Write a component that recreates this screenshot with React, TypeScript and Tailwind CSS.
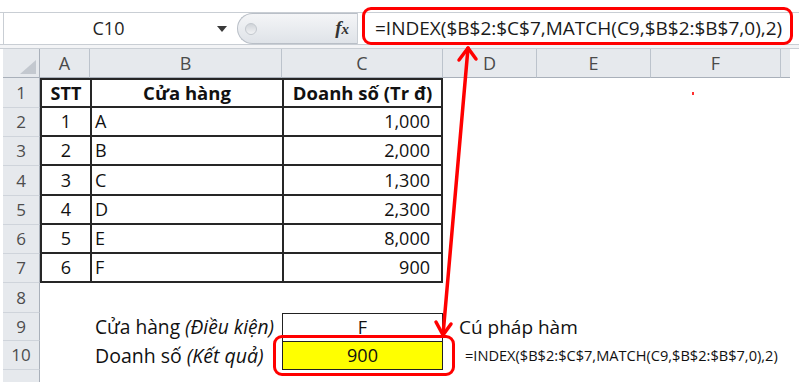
import React from "react"

const cols = [
  { key: "A", w: "w-[50px]" },
  { key: "B", w: "w-[192px]" },
  { key: "C", w: "w-[161px]" },
  { key: "D", w: "w-[94px]" },
  { key: "E", w: "w-[114px]" },
  { key: "F", w: "w-[130px]" },
]

const rowHeights = ["h-[30px]", "h-[29px]", "h-[29px]", "h-[30px]", "h-[29px]", "h-[29px]", "h-[29px]", "h-[30px]", "h-[28px]", "h-[29px]"]

const sales = [
  { stt: "1", store: "A", value: "1,000" },
  { stt: "2", store: "B", value: "2,000" },
  { stt: "3", store: "C", value: "1,300" },
  { stt: "4", store: "D", value: "2,300" },
  { stt: "5", store: "E", value: "8,000" },
  { stt: "6", store: "F", value: "900" },
]

const tb = "border-[#262626]"

function RowHead({ n, h }: { n: string; h: string }) {
  return (
    <div className={`${h} w-[37px] shrink-0 flex items-center justify-center bg-[#e6e9ed] border-r border-b border-r-[#a9b0ba] border-b-[#cfd4db] text-[17px] text-[#4d4d4d]`}>
      {n}
    </div>
  )
}

function Blank({ w, h }: { w: string; h: string }) {
  return <div className={`${w} ${h} shrink-0`} />
}

function FormulaBar() {
  return (
    <div className="h-[49px] pt-[12px] bg-white">
      <div className="h-[32px] flex border-t border-[#c9ced4]">
        {/* name box */}
        <div className="ml-[3px] w-[234px] h-[31px] shrink-0 flex items-center border-l border-[#c9ced4] bg-white">
          <span className="w-[209px] text-center text-[18px] text-[#1f1f1f]">C10</span>
          <svg width="10" height="6" viewBox="0 0 10 6" className="ml-[4px]">
            <path d="M0 0 L10 0 L5 6 Z" fill="#3a3a3a" />
          </svg>
        </div>
        {/* splitter + fx */}
        <div className="w-[120px] h-[31px] shrink-0 flex items-center rounded-l-[16px] border border-r-0 border-[#b9bfc7] bg-gradient-to-b from-[#f4f5f7] to-[#dfe3e8]">
          <div className="ml-[7px] w-[12px] h-[12px] rounded-full bg-gradient-to-b from-[#d0d4d9] to-[#f2f3f5] border border-[#c3c8ce]" />
          <span className="ml-auto mr-[8px] font-[family-name:'Liberation_Serif',serif] italic font-bold text-[19px] text-[#333]">
            f<span className="text-[15px]">x</span>
          </span>
        </div>
        <div className="flex-1 min-w-0 h-[31px] flex items-center pl-[17px] bg-white border-l border-[#c9ced4]">
          <span className="text-[19px] text-[#1a1a1a] whitespace-nowrap">=INDEX($B$2:$C$7,MATCH(C9,$B$2:$B$7,0),2)</span>
        </div>
      </div>
      <div className="h-[5px] border-t border-b border-[#c9ced4] bg-[#f3f4f6]" />
    </div>
  )
}

function ColumnHeaders() {
  return (
    <div className="flex h-[29px] pl-[3px]">
      <div className="w-[37px] h-full shrink-0 relative bg-[#e6e9ed] border-r border-b border-[#a9b0ba]">
        <svg width="16" height="14" viewBox="0 0 16 14" className="absolute right-[3px] bottom-[3px]">
          <path d="M16 0 L16 14 L0 14 Z" fill="#c3c8cf" />
        </svg>
      </div>
      {cols.map((c) => (
        <div key={c.key} className={`${c.w} h-full shrink-0 flex items-center justify-center bg-[#e6e9ed] border-r border-b border-r-[#bcc3cc] border-b-[#a9b0ba] text-[18px] text-[#4a4a4a]`}>
          {c.key}
        </div>
      ))}
      <div className="w-[9px] h-full shrink-0 bg-[#e6e9ed] border-b border-[#a9b0ba]" />
    </div>
  )
}

export default function App() {
  return (
    <div className="relative w-[799px] h-[382px] overflow-hidden bg-white font-[family-name:'Open_Sans',sans-serif] text-[#111]">
      <FormulaBar />
      <ColumnHeaders />

      {/* row 1: table header */}
      <div className="flex pl-[3px]">
        <RowHead n="1" h={rowHeights[0]} />
        <div className={`w-[50px] ${rowHeights[0]} shrink-0 flex items-center justify-center border-2 border-r-0 ${tb} font-bold text-[18px]`}>STT</div>
        <div className={`w-[192px] ${rowHeights[0]} shrink-0 flex items-center justify-center border-2 border-r-0 ${tb} font-bold text-[18.5px]`}>Cửa hàng</div>
        <div className={`w-[161px] ${rowHeights[0]} shrink-0 flex items-center justify-center border-2 ${tb} font-bold text-[18.5px]`}>Doanh số (Tr đ)</div>
      </div>

      {/* rows 2-7: data */}
      {sales.map((s, i) => {
        const h = rowHeights[i + 1]
        return (
          <div key={s.stt} className="flex pl-[3px]">
            <RowHead n={String(i + 2)} h={h} />
            <div className={`w-[50px] ${h} shrink-0 flex items-center justify-center border-l-2 border-b-2 ${tb} text-[18px]`}>{s.stt}</div>
            <div className={`w-[192px] ${h} shrink-0 flex items-center pl-[3px] border-l-2 border-b-2 ${tb} text-[18px]`}>{s.store}</div>
            <div className={`w-[161px] ${h} shrink-0 flex items-center justify-end pr-[11px] border-x-2 border-b-2 ${tb} text-[18px]`}>{s.value}</div>
          </div>
        )
      })}

      {/* row 8 */}
      <div className="flex pl-[3px]">
        <RowHead n="8" h={rowHeights[7]} />
        <Blank w="w-[50px]" h={rowHeights[7]} />
      </div>

      {/* row 9 */}
      <div className="flex pl-[3px]">
        <RowHead n="9" h={rowHeights[8]} />
        <Blank w="w-[50px]" h={rowHeights[8]} />
        <div className={`w-[192px] ${rowHeights[8]} shrink-0 flex items-center pl-[5px] text-[19.2px] whitespace-nowrap`}>
          Cửa hàng&nbsp;<i>(Điều kiện)</i>
        </div>
        <div className={`w-[161px] ${rowHeights[8]} shrink-0 flex items-center justify-center border border-b-0 border-[#222] text-[18px]`}>F</div>
        <div className={`${rowHeights[8]} flex items-center pl-[16px] text-[19px] whitespace-nowrap`}>Cú pháp hàm</div>
      </div>

      {/* row 10 */}
      <div className="flex pl-[3px]">
        <RowHead n="10" h={rowHeights[9]} />
        <Blank w="w-[50px]" h={rowHeights[9]} />
        <div className={`w-[192px] ${rowHeights[9]} shrink-0 flex items-center pl-[5px] text-[19.5px] whitespace-nowrap`}>
          Doanh số&nbsp;<i>(Kết quả)</i>
        </div>
        <div className={`w-[161px] ${rowHeights[9]} shrink-0 flex items-center justify-center border border-[#222] bg-[#ffff00] text-[18px]`}>900</div>
        <div className={`${rowHeights[9]} flex items-center pl-[22px] text-[14.6px] whitespace-nowrap`}>=INDEX($B$2:$C$7,MATCH(C9,$B$2:$B$7,0),2)</div>
      </div>

      {/* row 11 (cut off) */}
      <div className="flex pl-[3px]">
        <RowHead n="" h="h-[29px]" />
      </div>

      {/* annotations */}
      <div className="absolute left-[362px] top-[7px] w-[431px] h-[38px] rounded-[9px] border-[3.5px] border-[#ff0000]" />
      <div className="absolute left-[273px] top-[335px] w-[182px] h-[41px] rounded-[9px] border-[3.5px] border-[#ff0000]" />
      <div className="absolute left-[692px] top-[92px] w-[2px] h-[3px] bg-[#ff3030]" />
      <svg className="absolute left-0 top-0 pointer-events-none" width="799" height="382" viewBox="0 0 799 382">
        <g stroke="#ff0000" strokeWidth="3.5" fill="none" strokeLinecap="round" strokeLinejoin="round">
          <path d="M468 48 L443 335" />
          <path d="M459 60 L468 48 L476 59" />
          <path d="M436 322 L443 335 L451 324" />
        </g>
      </svg>
    </div>
  )
}
